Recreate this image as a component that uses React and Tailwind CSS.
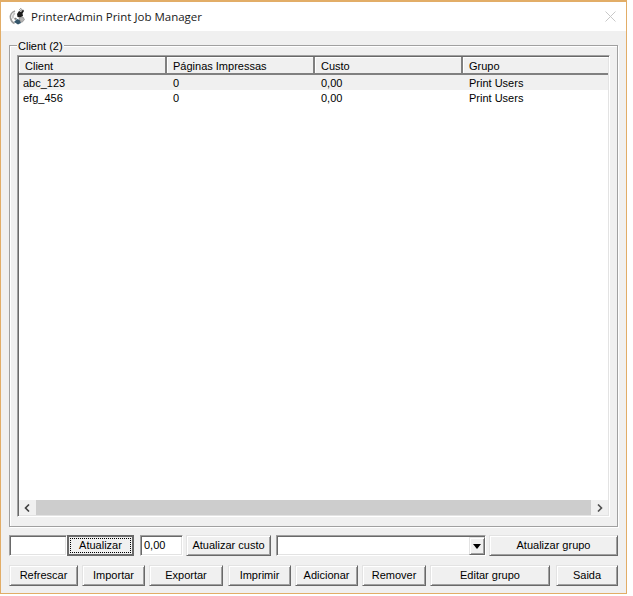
const raised =
  "border border-t-[#e3e3e3] border-l-[#e3e3e3] border-r-[#696969] border-b-[#696969] shadow-[inset_1px_1px_0_#ffffff,inset_-1px_-1px_0_#a0a0a0] bg-[#f0f0f0]";
const sunken =
  "border border-t-[#a0a0a0] border-l-[#a0a0a0] border-r-white border-b-white shadow-[inset_1px_1px_0_#696969,inset_-1px_-1px_0_#e3e3e3]";

const columns = ["Client", "Páginas Impressas", "Custo", "Grupo"];
const rows = [
  ["abc_123", "0", "0,00", "Print Users"],
  ["efg_456", "0", "0,00", "Print Users"],
];

function Btn({ w, ml, children }) {
  return (
    <button className={`${raised} ${w} ${ml} h-[21px] flex items-center justify-center text-black`}>
      {children}
    </button>
  );
}

function AppIcon() {
  return (
    <svg width="17" height="17" viewBox="0 0 17 17" className="shrink-0 -ml-[1px]">
      <path d="M6 3C3 4 1 7 1.500 10c.5 2.500 2 4.500 4 5.500" fill="none" stroke="#9a9a9a" strokeWidth="1.600" />
      <path d="M6 5C4.500 6 3.500 8 4 10.500" fill="none" stroke="#c4c4c4" strokeWidth="1.600" />
      <path d="M5 14l3-3 3 1 1 3-3 1.500z" fill="#35566a" />
      <path d="M8 6l2-3 2 1 2-2.500 1 1.500-1.500 2.500L14 8l-3 1.500L8.500 9z" fill="#1c1c1c" />
      <path d="M10.500 2l1-1.500 1.500 1-1 1.500z" fill="#ffffff" stroke="#333333" strokeWidth="0.500" />
      <path d="M10 10l4-1 1.500 2.500-2.500 3-2-1.500z" fill="#b4b4b4" stroke="#707070" strokeWidth="0.500" />
      <path d="M6 9.500l2 1-1.500 1.500-1.500-1z" fill="#7c7c7c" />
    </svg>
  );
}

export default function App() {
  return (
    <div className="w-[633px] h-[596px] bg-white font-['Liberation_Sans',Arial,sans-serif] text-[11px] leading-none text-black overflow-hidden">
      <div className="w-[627px] h-[594px] border border-[#e2ad67] border-t-2 bg-[#f0f0f0] flex flex-col">
        {/* barra de titulo */}
        <div className="h-[29px] bg-white flex items-center pl-[9px] pr-[9px] shrink-0">
          <AppIcon />
          <span className="ml-[5px] font-['Open_Sans',sans-serif] text-[11.5px] text-[#1a1a1a]">
            PrinterAdmin Print Job Manager
          </span>
          <svg width="11" height="11" viewBox="0 0 11 11" className="ml-auto mr-[1px]">
            <path d="M0.5 0.5l10 10M10.5 0.5l-10 10" stroke="#c8c8c8" strokeWidth="1" fill="none" />
          </svg>
        </div>

        {/* grupo Client */}
        <div className="relative mt-[14px] ml-[8px] w-[609px] h-[482px] border border-[#a0a0a0] shadow-[inset_1px_1px_0_#ffffff,1px_1px_0_#ffffff] pt-[9px] pl-[7px] shrink-0">
          <span className="absolute left-[7px] -top-[5px] bg-[#f0f0f0] px-[1px]">Client (2)</span>
          <div className={`${sunken} w-[593px] h-[462px] bg-white p-[1px] flex flex-col`}>
            <div className="flex h-[18px] shrink-0 border-b-2 border-[#808080]">
              {columns.map((c, i) => (
                <div
                  key={c}
                  className={`${i === 3 ? "flex-1" : "w-[148px] border-r-2 border-[#808080]"} bg-[#f0f0f0] flex items-center pl-[6px] pt-[2px] shadow-[inset_1px_1px_0_#ffffff]`}
                >
                  {c}
                </div>
              ))}
            </div>
            <div className="flex-1">
              {rows.map((r, i) => (
                <div key={r[0]} className={`flex h-[15px] items-center pt-[2px] ${i === 0 ? "bg-[#f0f0f0]" : ""}`}>
                  {r.map((v, j) => (
                    <div key={j} className={`${j === 3 ? "flex-1 pl-[6px]" : j === 0 ? "w-[148px] pl-[4px]" : "w-[148px] pl-[6px]"}`}>
                      {v}
                    </div>
                  ))}
                </div>
              ))}
            </div>
            <div className="h-[15px] flex bg-[#f0f0f0] shrink-0">
              <div className="w-[17px] flex items-center justify-center">
                <svg width="7" height="8" viewBox="0 0 7 8">
                  <path d="M5 0.5L1.5 4 5 7.5" stroke="#404040" strokeWidth="1.6" fill="none" />
                </svg>
              </div>
              <div className="flex-1 bg-[#cdcdcd]" />
              <div className="w-[17px] flex items-center justify-center">
                <svg width="7" height="8" viewBox="0 0 7 8">
                  <path d="M2 0.5L5.5 4 2 7.5" stroke="#505050" strokeWidth="1.6" fill="none" />
                </svg>
              </div>
            </div>
          </div>
        </div>

        {/* linha de atualizar */}
        <div className="flex mt-[8px] ml-[8px] h-[21px] shrink-0">
          <div className={`${sunken} w-[58px] bg-white`} />
          <button className="w-[67px] h-[21px] border-2 border-[#696969] bg-[#f0f0f0] flex items-center justify-center p-[1px]">
            <span className="w-full h-full border border-dotted border-black flex items-center justify-center">Atualizar</span>
          </button>
          <div className={`${sunken} ml-[6px] w-[43px] bg-white flex items-center pl-[3px]`}>0,00</div>
          <Btn w="w-[85px]" ml="ml-[3px]">Atualizar custo</Btn>
          <div className={`${sunken} ml-[5px] w-[210px] bg-white relative`}>
            <div className={`${raised} absolute right-0 top-[1px] w-[16px] h-[18px] flex items-center justify-center`}>
              <svg width="8" height="5" viewBox="0 0 8 5">
                <path d="M0 0h8L4 5z" fill="#000000" />
              </svg>
            </div>
          </div>
          <Btn w="w-[129px]" ml="ml-[3px]">Atualizar grupo</Btn>
        </div>

        {/* linha de botoes */}
        <div className="flex mt-[9px] ml-[8px] h-[21px] shrink-0">
          <Btn w="w-[69px]">Refrescar</Btn>
          <Btn w="w-[63px]" ml="ml-[4px]">Importar</Btn>
          <Btn w="w-[74px]" ml="ml-[4px]">Exportar</Btn>
          <Btn w="w-[63px]" ml="ml-[5px]">Imprimir</Btn>
          <Btn w="w-[63px]" ml="ml-[4px]">Adicionar</Btn>
          <Btn w="w-[64px]" ml="ml-[4px]">Remover</Btn>
          <Btn w="w-[120px]" ml="ml-[4px]">Editar grupo</Btn>
          <Btn w="w-[62px]" ml="ml-[6px]">Saida</Btn>
        </div>
      </div>
    </div>
  );
}
